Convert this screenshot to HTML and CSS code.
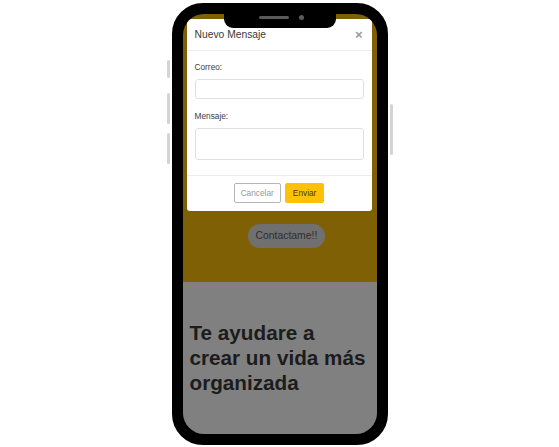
FILE: index.html
```html
<!DOCTYPE html>
<html lang="es">
<head>
    <meta charset="UTF-8">
    <meta name="viewport" content="width=device-width, initial-scale=1.0">
    <title>Contacto</title>
    <link rel="stylesheet" href="styles.css">
</head>
<body>
    <div class="phone">
        <span class="side-btn btn-mute"></span>
        <span class="side-btn btn-vol-up"></span>
        <span class="side-btn btn-vol-down"></span>
        <span class="side-btn btn-power"></span>

        <div class="screen">
            <section class="hero">
                <button class="contact-btn">Contactame!!</button>
            </section>
            <section class="about">
                <h1>Te ayudare a crear un vida más organizada</h1>
            </section>

            <!-- Modal over the page -->
            <div class="modal">
                <div class="modal-header">
                    <h2>Nuevo Mensaje</h2>
                    <span class="close">&times;</span>
                </div>
                <div class="modal-body">
                    <div class="field">
                        <label for="correo">Correo:</label>
                        <input type="text" id="correo">
                    </div>
                    <div class="field">
                        <label for="mensaje">Mensaje:</label>
                        <textarea id="mensaje"></textarea>
                    </div>
                </div>
                <div class="modal-footer">
                    <button class="btn-cancel">Cancelar</button>
                    <button class="btn-send">Enviar</button>
                </div>
            </div>
        </div>

        <div class="notch">
            <span class="speaker"></span>
            <span class="camera"></span>
        </div>
    </div>
</body>
</html>
```

FILE: styles.css
```css
body {
    font-family: "Liberation Sans", Arial, sans-serif;
    margin: 0;
    padding: 0;
    background-color: #fff;
    display: flex;
    align-items: center;
    justify-content: center;
    height: 100vh;
}

.phone {
    position: relative;
    width: 194px;
    height: 420px;
    border: 11px solid #000;
    border-radius: 31px;
    background-color: #000;
}

.side-btn {
    position: absolute;
    width: 3px;
    background-color: #d4d4d4;
    border-radius: 2px;
}

.btn-mute {
    left: -16px;
    top: 46px;
    height: 18px;
}

.btn-vol-up {
    left: -16px;
    top: 79px;
    height: 31px;
}

.btn-vol-down {
    left: -16px;
    top: 119px;
    height: 31px;
}

.btn-power {
    right: -16px;
    top: 90px;
    height: 51px;
}

.screen {
    position: relative;
    height: 100%;
    border-radius: 21px;
    overflow: hidden;
    display: flex;
    flex-direction: column;
}

.hero {
    height: 268px;
    background-color: #806004;
    padding-top: 210px;
    padding-left: 65px;
    box-sizing: border-box;
}

.contact-btn {
    font-family: inherit;
    font-size: 10.4px;
    color: #2e2e2e;
    background-color: #707070;
    border: none;
    border-radius: 12px;
    height: 24px;
    padding: 0 8px;
}

.about {
    flex: 1;
    background-color: #808080;
    padding: 38px 7px 0;
}

.about h1 {
    margin: 0;
    font-size: 20.7px;
    line-height: 25px;
    color: #1c1c1c;
}

.notch {
    position: absolute;
    top: -11px;
    left: 41px;
    width: 112px;
    height: 25px;
    background-color: #000;
    border-radius: 0 0 9px 9px;
    display: flex;
    align-items: center;
    justify-content: center;
    gap: 10px;
    padding-top: 4px;
    box-sizing: border-box;
}

.speaker {
    width: 30px;
    height: 3px;
    border-radius: 2px;
    background-color: #5a5a5a;
    margin-left: 4px;
}

.camera {
    width: 5px;
    height: 5px;
    border-radius: 50%;
    background-color: #5a5a5a;
}

.modal {
    position: absolute;
    top: 5px;
    left: 4px;
    width: 185px;
    background-color: #fff;
    border-radius: 3px;
}

.modal-header {
    display: flex;
    align-items: center;
    justify-content: space-between;
    height: 32px;
    padding: 0 8px;
    border-bottom: 1px solid #ececec;
    box-sizing: border-box;
}

.modal-header h2 {
    margin: 0;
    font-size: 10.3px;
    font-weight: normal;
    color: #3a3a3a;
}

.close {
    font-size: 13px;
    font-weight: bold;
    color: #9a9a9a;
    margin-right: 1px;
}

.modal-body {
    padding: 11px 8px 15px;
}

.field + .field {
    margin-top: 12px;
}

.field label {
    display: block;
    font-size: 8.3px;
    line-height: 10px;
    color: #3c3c3c;
    margin-bottom: 7px;
}

.field input,
.field textarea {
    display: block;
    width: 100%;
    box-sizing: border-box;
    border: 1px solid #e0e0e0;
    border-radius: 3px;
    margin: 0;
    resize: none;
}

.field input {
    height: 20px;
}

.field textarea {
    height: 32px;
}

.modal-footer {
    display: flex;
    justify-content: center;
    gap: 4px;
    padding: 7px 0 8px;
    border-top: 1px solid #ececec;
}

.modal-footer button {
    font-family: inherit;
    font-size: 8.3px;
    height: 20px;
    border-radius: 2px;
    cursor: pointer;
}

.btn-cancel {
    background-color: #fff;
    color: #999;
    border: 1px solid #b5b5b5;
    padding: 0 6px;
}

.btn-send {
    background-color: #ffc107;
    color: #4a3a10;
    border: 1px solid #ffc107;
    padding: 0 7px;
}
```
